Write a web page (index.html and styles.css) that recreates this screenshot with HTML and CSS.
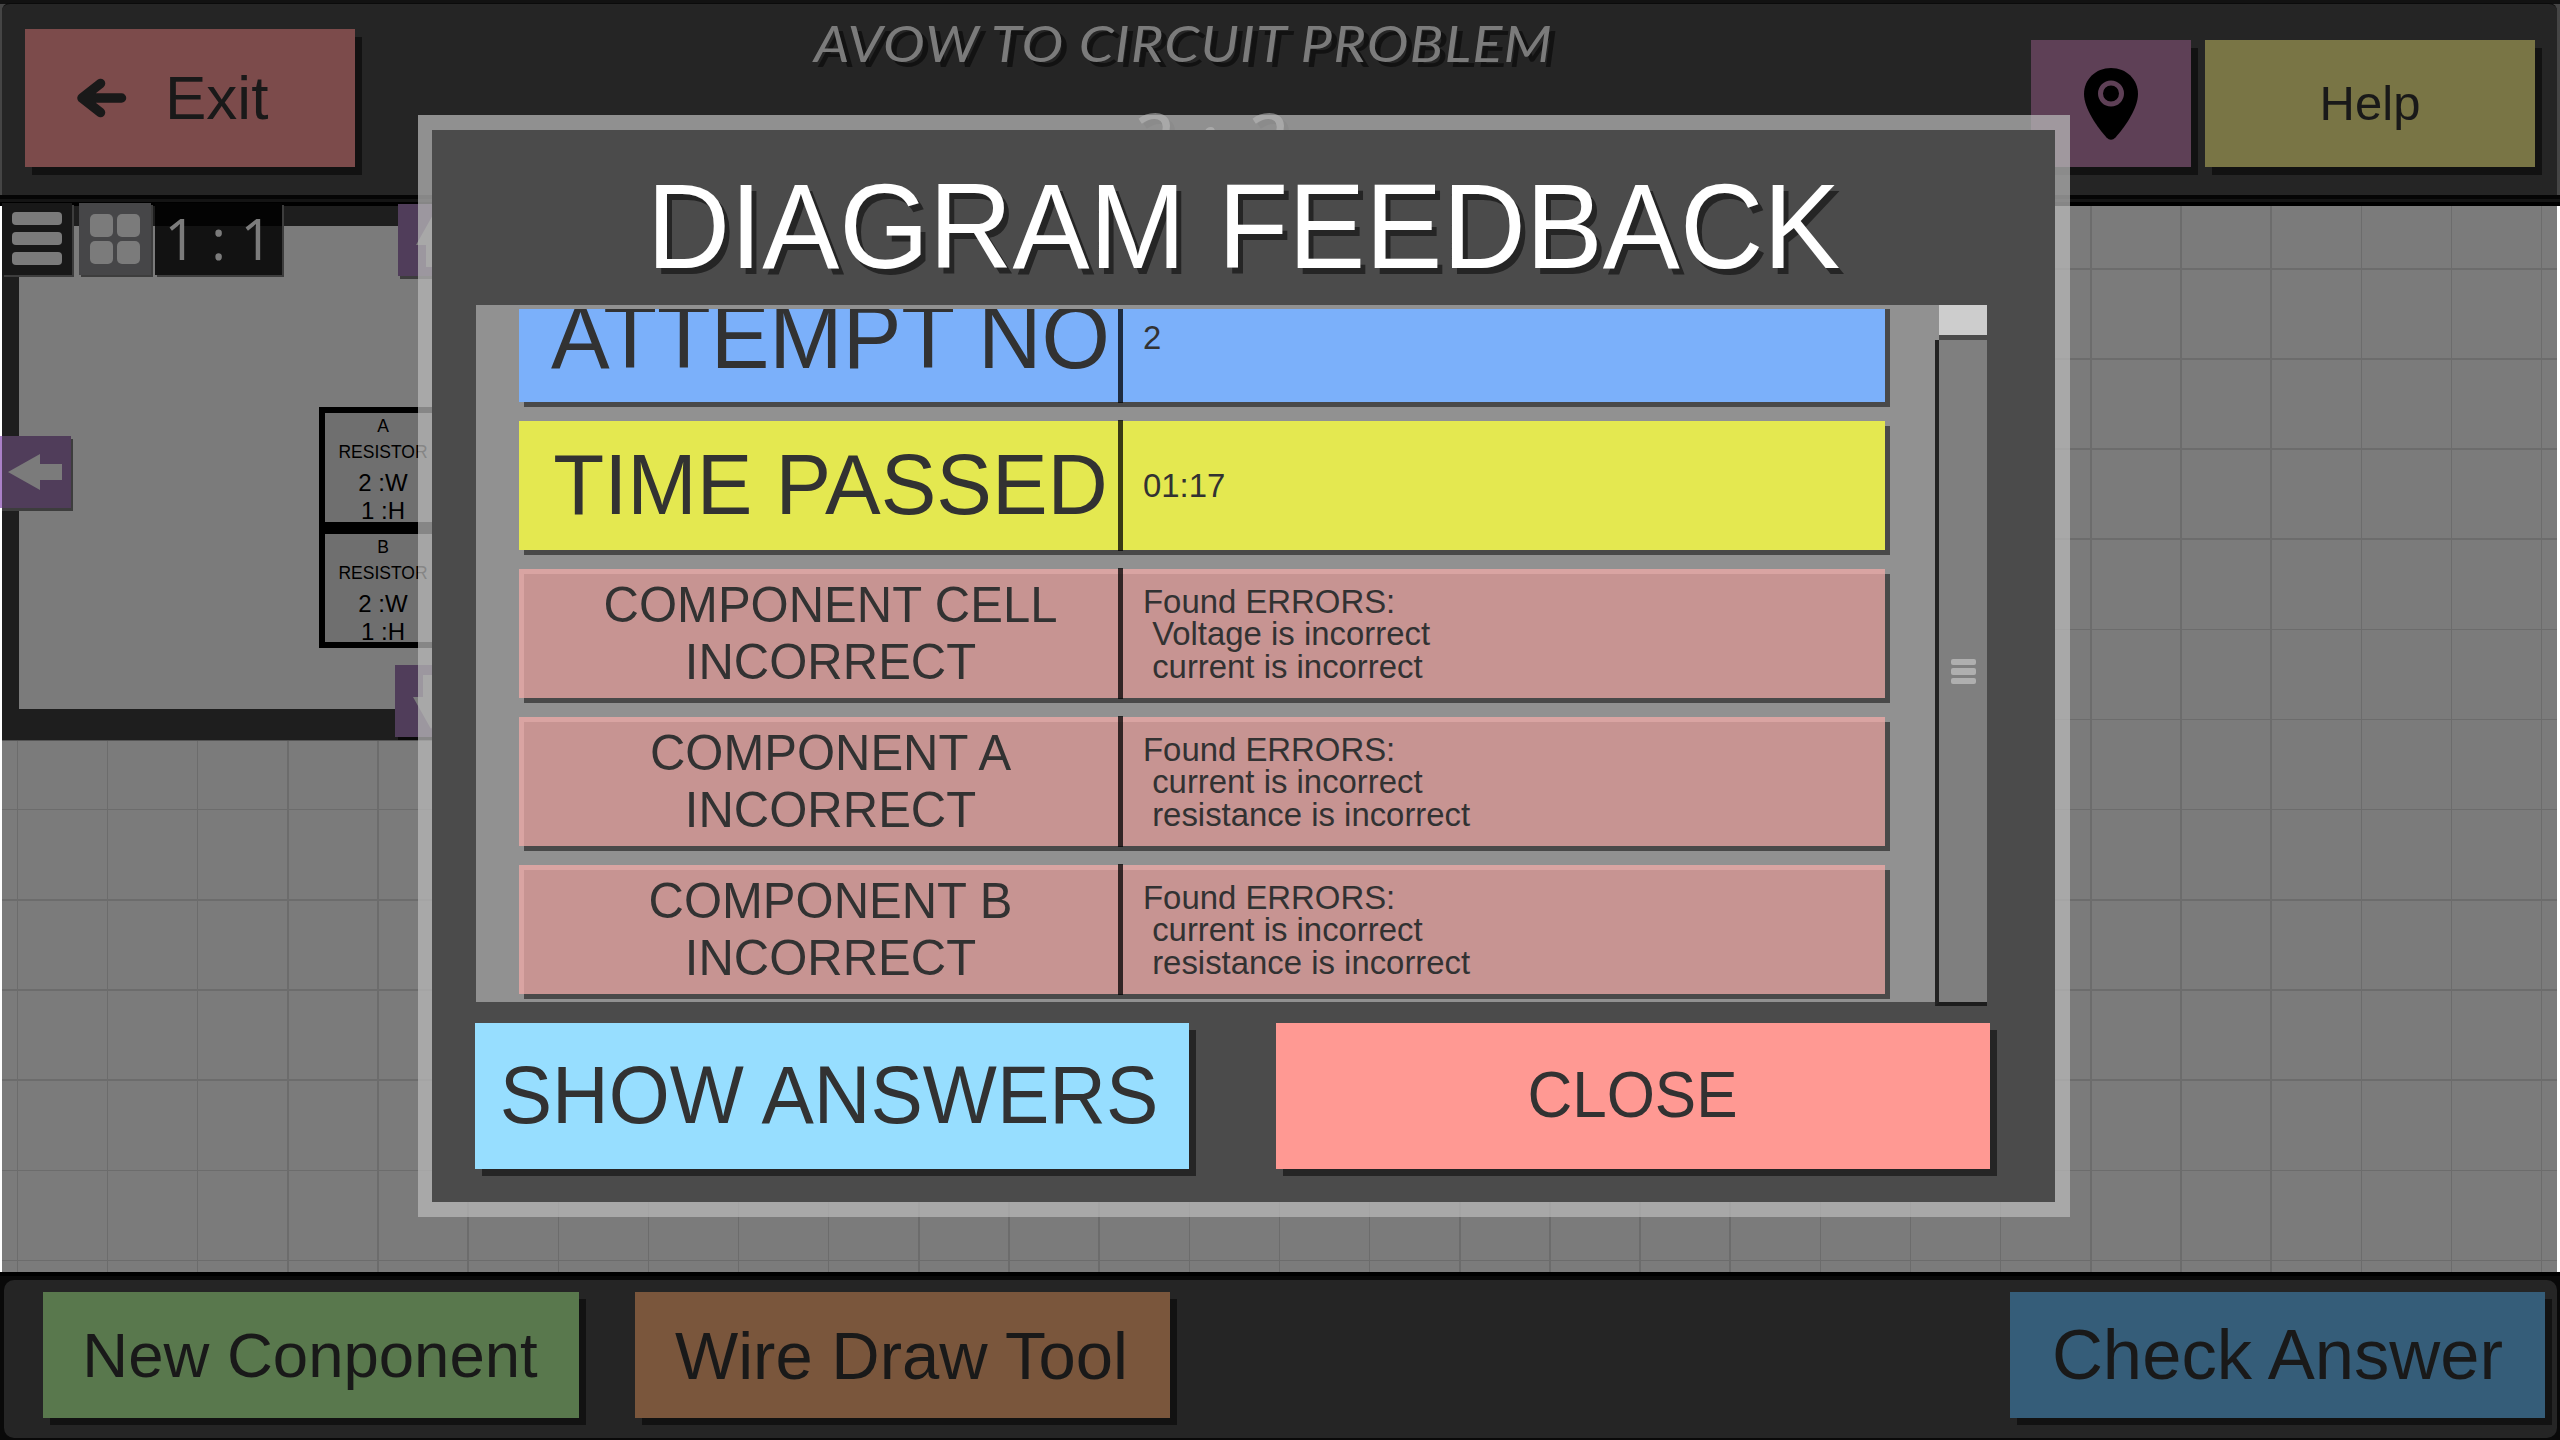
FILE: index.html
```html
<!DOCTYPE html>
<html lang="en">
<head>
<meta charset="utf-8">
<title>Avow to Circuit Problem</title>
<link rel="stylesheet" href="styles.css">
</head>
<body>
<div class="screen">
  <header class="topbar">
    <div class="topbar-inner">
      <button class="btn exit">
        <svg class="exit-icon" viewBox="0 0 51 40"><path d="M24.500 5.500 6 20l18.500 14.500M9 20h36.500" fill="none" stroke="#191919" stroke-width="9.500" stroke-linecap="round" stroke-linejoin="round"/></svg>
        <span>Exit</span>
      </button>
      <div class="heading">
        <h1>AVOW TO CIRCUIT PROBLEM</h1>
        <p class="ratio">3 : 3</p>
      </div>
      <button class="btn pin">
        <svg class="pin-icon" viewBox="0 0 54 72"><path d="M27 0C11.500 0 0 11.500 0 26c0 15 14 34 22.500 43.500Q27 74 31.500 69.500C40 60 54 41 54 26 54 11.500 42.500 0 27 0z"/><circle cx="27" cy="25.500" r="10.500" fill="none" stroke="#5e4056" stroke-width="5"/></svg>
      </button>
      <button class="btn help">Help</button>
    </div>
  </header>

  <main class="canvas">
    <section class="preview">
      <div class="tools">
        <div class="tool menu"><i></i><i></i><i></i></div>
        <div class="tool tiles"><i></i><i></i><i></i><i></i></div>
        <div class="tool scale">1 : 1</div>
      </div>
      <div class="diagram">
        <div class="part"><small>A</small><small>RESISTOR</small><b>2 :W</b><b>1 :H</b></div>
        <div class="part"><small>B</small><small>RESISTOR</small><b>2 :W</b><b>1 :H</b></div>
      </div>
      <div class="pan pan-up"><svg viewBox="0 0 72 72"><path d="M36 9 54 41H44V63H28V41H18z"/></svg></div>
      <div class="pan pan-left"><svg viewBox="0 0 72 72"><path d="M8 36 40 18V28H62V44H40V54z"/></svg></div>
      <div class="pan pan-down"><svg viewBox="0 0 72 72"><path d="M36 64 54 32H44V10H28V32H18z"/></svg></div>
    </section>
  </main>

  <footer class="bottombar">
    <div class="bottombar-inner">
      <button class="btn new">New Conponent</button>
      <button class="btn wire">Wire Draw Tool</button>
      <button class="btn check">Check Answer</button>
    </div>
  </footer>

  <div class="modal">
    <div class="modal-body">
      <h2><span class="caps">DIAGRAM FEEDBACK</span></h2>
      <div class="scroll">
        <div class="list">
          <div class="row blue"><div class="label attempt"><span class="caps">ATTEMPT NO</span></div><div class="rule"></div><div class="value">2</div></div>
          <div class="row yellow"><div class="label time"><span class="caps">TIME PASSED</span></div><div class="rule"></div><div class="value">01:17</div></div>
          <div class="row red"><div class="label"><span class="caps">COMPONENT CELL<br>INCORRECT</span></div><div class="rule"></div><div class="value">Found ERRORS:
 Voltage is incorrect
 current is incorrect</div></div>
          <div class="row red"><div class="label"><span class="caps">COMPONENT A<br>INCORRECT</span></div><div class="rule"></div><div class="value">Found ERRORS:
 current is incorrect
 resistance is incorrect</div></div>
          <div class="row red"><div class="label"><span class="caps">COMPONENT B<br>INCORRECT</span></div><div class="rule"></div><div class="value">Found ERRORS:
 current is incorrect
 resistance is incorrect</div></div>
        </div>
        <div class="scrollbar">
          <div class="track-end"></div>
          <div class="thumb"><i></i><i></i><i></i></div>
        </div>
      </div>
      <div class="actions">
        <button class="btn answers"><span class="caps">SHOW ANSWERS</span></button>
        <button class="btn close"><span class="caps">CLOSE</span></button>
      </div>
    </div>
  </div>
</div>
</body>
</html>
```

FILE: styles.css
```css
* { box-sizing: border-box; }
html, body { margin: 0; }
body {
  width: 2560px;
  height: 1440px;
  overflow: hidden;
  font-family: "Liberation Sans", Arial, sans-serif;
  background: #fff;
}
h1, h2, p { margin: 0; font-weight: normal; }

.screen {
  position: relative;
  display: grid;
  grid-template-rows: 206px 1066px 168px;
  height: 1440px;
}

.btn {
  display: flex;
  align-items: center;
  justify-content: center;
  padding: 0;
  border: 0;
  border-radius: 0;
  font-family: inherit;
  line-height: 1;
  white-space: nowrap;
  color: #191919;
  box-shadow: 7px 8px 0 #121212;
}
/* Taller capitals, stretched from the baseline. */
.caps {
  display: inline-block;
  transform: scaleY(1.04);
  transform-origin: 50% calc(50% + 0.3465em);
}

/* Top bar */
.topbar {
  padding: 3px 3px 0 2px;
  background: linear-gradient(#121212 4px, #454545 4px 195px, #050505 195px 199px, #141414 199px 202px, #000 202px);
}
.topbar-inner {
  display: flex;
  align-items: flex-start;
  height: 192px;
  padding: 26px 22px 0 23px;
  border-top: 1px solid #0b0b0b;
  border-radius: 8px 8px 0 0;
  background: #252525;
}
.exit {
  width: 330px;
  height: 138px;
  margin-top: -1px;
  justify-content: flex-start;
  padding-left: 51px;
  gap: 38px;
  font-size: 62px;
  background: #7c4b4b;
}
.exit-icon { width: 51px; height: 40px; }
.heading {
  flex: 1;
  margin-top: -26px;
  text-align: center;
  color: #7b7b7b;
  font-family: Lato, "Open Sans", sans-serif;
  font-style: italic;
  text-shadow: 5px 5px 0 #121212;
}
.heading h1 {
  margin-right: 19px;
  font-size: 51px;
  line-height: 78px;
  letter-spacing: 1px;
  transform: scaleX(1.1);
}
.heading .ratio {
  margin: 8px 0 0 30px;
  font-family: "Noto Sans", "Open Sans", sans-serif;
  font-size: 80px;
  line-height: 100px;
  letter-spacing: 2px;
}
.pin { width: 160px; height: 127px; margin-top: 10px; background: #5e4056; }
.pin-icon { width: 54px; height: 72px; margin-left: -1px; }
.help { width: 330px; height: 127px; margin: 10px 0 0 14px; font-size: 49px; background: #797545; }

/* Grid canvas */
.canvas {
  position: relative;
  margin: 0 3px 0 2px;
  background:
    repeating-linear-gradient(90deg, transparent 0 14.6px, #6c6c6c 14.6px 16.1px, transparent 16.1px 90.15px),
    repeating-linear-gradient(180deg, transparent 0 62px, #6c6c6c 62px 63.5px, transparent 63.5px 90.15px),
    #7b7b7b;
}

/* Diagram preview, floating over the canvas */
.preview {
  position: absolute;
  left: 0;
  top: 0;
  width: 560px;
  height: 534px;
  border: solid #1e1e1e;
  border-width: 20px 17px 31px 17px;
  box-shadow: 0 1px 0 #555;
  background: #7b7b7b;
}
.tools {
  position: absolute;
  left: -17px;
  top: -23px;
  display: flex;
}
.tool { height: 72px; box-shadow: 2px 2px 0 #3d3d3d; }
.menu {
  display: flex;
  flex-direction: column;
  gap: 7px;
  width: 70px;
  padding: 9px 10px;
  background: #181818;
}
.menu i { height: 13px; border-radius: 4px; background: #7b7b7b; }
.tiles {
  display: grid;
  grid-template-columns: 23px 23px;
  grid-template-rows: 23px 23px;
  gap: 4px;
  width: 72px;
  margin-left: 7px;
  padding: 11px;
  background: #464648;
}
.tiles i { border-radius: 5px; background: #7b7b7b; }
.scale {
  width: 127px;
  margin-left: 4px;
  text-align: center;
  color: #7b7b7b;
  font: 56px/70px "Open Sans", "Noto Sans", sans-serif;
  background: linear-gradient(#030303 23px, #121212 23px);
}
.diagram {
  width: 128px;
  margin: 181px 0 0 300px;
  border: 6px solid #000;
}
.part {
  display: flex;
  flex-direction: column;
  align-items: center;
  height: 109px;
  padding-top: 0;
  background: #6f6f6f;
  color: #000;
}
.part + .part { height: 120px; border-top: 12px solid #000; }
.part small { font-size: 17.5px; line-height: 26px; }
.part b { font-size: 24px; font-weight: normal; line-height: 28px; }
.part b:first-of-type { margin-top: 4px; }
.pan {
  position: absolute;
  width: 72px;
  height: 72px;
  background: #503d5a;
  box-shadow: 2px 3px 0 #3d3d3d;
}
.pan svg { display: block; width: 72px; height: 72px; fill: #7b7b7b; }
.pan-up { left: 379px; top: -22px; }
.pan-left { left: -19px; top: 210px; background: linear-gradient(90deg, #aa80c8 2px, #503d5a 2px); }
.pan-left { width: 71px; }
.pan-down { left: 376px; top: 439px; box-shadow: 3px 3px 0 #0a0a0a; }

/* Bottom bar */
.bottombar {
  padding: 8px 3px 2px 4px;
  background: linear-gradient(#000 4px, #090909 4px);
}
.bottombar-inner {
  display: flex;
  height: 158px;
  padding: 12px 12px 0 39px;
  border-radius: 10px;
  background: #252525;
}
.bottombar .btn { width: 535px; height: 126px; padding-top: 1px; box-shadow: 7px 7px 0 #121212; }
.bottombar .new { width: 536px; padding-right: 2px; font-size: 63.5px; background: #59784d; }
.bottombar .wire { margin-left: 56px; padding-right: 2px; font-size: 67px; background: #7a563c; }
.bottombar .check { margin-left: auto; font-size: 70.6px; background: #355d79; }

/* Feedback dialog */
.modal {
  position: absolute;
  left: 418px;
  top: 115px;
  width: 1652px;
  height: 1102px;
  padding: 15px 15px 15px 14px;
  background: rgba(186, 186, 186, 0.72);
}
.modal-body { height: 1072px; padding: 20px 65px 0 43px; background: #4b4b4b; }
.modal h2 {
  height: 155px;
  margin: 0 -65px 0 -43px;
  text-align: center;
  font-size: 115.5px;
  line-height: 155px;
  color: #fff;
  text-shadow: 5px 6px 0 #252525;
}
.scroll {
  display: flex;
  width: 1511px;
  height: 697px;
  margin-left: 1px;
  padding: 4px 0 0 43px;
  background: #919191;
}
.list {
  display: flex;
  flex-direction: column;
  justify-content: flex-end;
  gap: 19px;
  width: 1416px;
  height: 693px;
  padding: 0 50px 8px 0;
  overflow: hidden;
}
.row {
  display: grid;
  flex: none;
  grid-template-columns: 599px 5px 1fr;
  height: 129px;
  box-shadow: 5px 5px 0 #494949;
  color: #323232;
}
.row .label {
  display: flex;
  align-items: center;
  justify-content: center;
  padding: 0 0 1px 24px;
  text-align: center;
  font-size: 49px;
  line-height: 54.5px;
  white-space: nowrap;
}
.row .label .caps { transform: scaleY(1.03); transform-origin: 50% 60%; }
.row .label.attempt { padding-bottom: 0; font-size: 88px; }
.row .label.time { padding-bottom: 0; font-size: 83.4px; }
.rule { margin: -1px 0; background: rgba(0, 0, 0, 0.75); }
.value {
  display: flex;
  align-items: center;
  padding: 2px 0 0 20px;
  font-size: 32.9px;
  line-height: 32.2px;
  white-space: pre;
}
.blue { background: #7bb0fa; }
.yellow { background: #e4e850; }
.red { background: linear-gradient(#c79492, #c79492) 5px 5px no-repeat #d9a4a2; }
.scrollbar { width: 52px; height: 701px; margin-top: -4px; }
.track-end {
  height: 35px;
  margin-left: 4px;
  border-bottom: 5px solid #4b4b4b;
  background: #cdcdcd;
}
.thumb {
  display: flex;
  flex-direction: column;
  align-items: center;
  justify-content: center;
  gap: 3px;
  height: 666px;
  padding-top: 1px;
  border-left: 4px solid #222;
  border-bottom: 4px solid #1c1c1c;
  background: #7f7f7f;
}
.thumb i { width: 25px; height: 6.5px; border-radius: 2px; background: #afafaf; }
.actions { display: flex; gap: 87px; margin-top: 21px; }
.actions .btn { width: 714px; height: 146px; color: #323232; box-shadow: 7px 7px 0 #252525; }
.actions .answers { padding-right: 6px; font-size: 78.5px; background: #97deff; }
.actions .close { padding-right: 1px; font-size: 62px; background: #ff9993; }
```
